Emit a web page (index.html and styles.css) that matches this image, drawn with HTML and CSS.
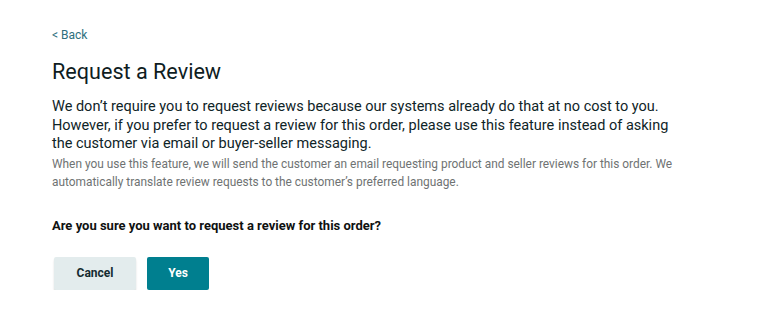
FILE: index.html
```html
<!DOCTYPE html>
<html lang="en">
<head>
    <meta charset="UTF-8">
    <title>Request a Review</title>
    <link rel="stylesheet" href="styles.css">
</head>
<body>
<div class="page">
    <a class="back-link" href="#">&lt; Back</a>
    <h1 class="title">Request a Review</h1>
    <p class="lead">We don’t require you to request reviews because our systems already do that at no cost to you. However, if you prefer to request a review for this order, please use this feature instead of asking the customer via email or buyer-seller messaging.</p>
    <p class="note">When you use this feature, we will send the customer an email requesting product and seller reviews for this order. We automatically translate review requests to the customer’s preferred language.</p>
    <p class="question">Are you sure you want to request a review for this order?</p>
    <div class="actions">
        <button type="button" class="btn btn-secondary">Cancel</button>
        <button type="button" class="btn btn-primary">Yes</button>
    </div>
</div>
</body>
</html>
```

FILE: styles.css
```css
body {
    margin: 0;
    padding: 0;
    background-color: #fff;
    font-family: Roboto, Arial, sans-serif;
    color: #0f1111;
}

.page {
    padding: 27px 0 0 52px;
    width: 628px;
}

.back-link {
    display: block;
    font-size: 12px;
    line-height: 16px;
    color: #2d6f7d;
    text-decoration: none;
}

.title {
    margin: 14px 0 0 0;
    font-size: 21.6px;
    font-weight: 400;
    line-height: 30px;
    color: #0f1d1f;
}

.lead {
    margin: 11px 0 0 0;
    font-size: 14.5px;
    line-height: 18.5px;
    color: #0f2427;
}

.note {
    margin: 1px 0 0 0;
    font-size: 11.9px;
    line-height: 18px;
    color: #6f7373;
}

.question {
    margin: 26px 0 0 0;
    font-size: 13px;
    font-weight: bold;
    line-height: 18px;
}

.actions {
    display: flex;
    gap: 11px;
    margin-top: 22px;
    padding-left: 2px;
}

.btn {
    height: 33px;
    border: none;
    border-radius: 2px;
    font-family: inherit;
    font-size: 12px;
    font-weight: bold;
    cursor: pointer;
}

.btn-secondary {
    width: 82px;
    background-color: #e3eced;
    color: #142b30;
    box-shadow: 0 2px 2px rgba(0, 0, 0, 0.15);
}

.btn-primary {
    width: 62px;
    background-color: #007f8f;
    color: #fff;
}
```
